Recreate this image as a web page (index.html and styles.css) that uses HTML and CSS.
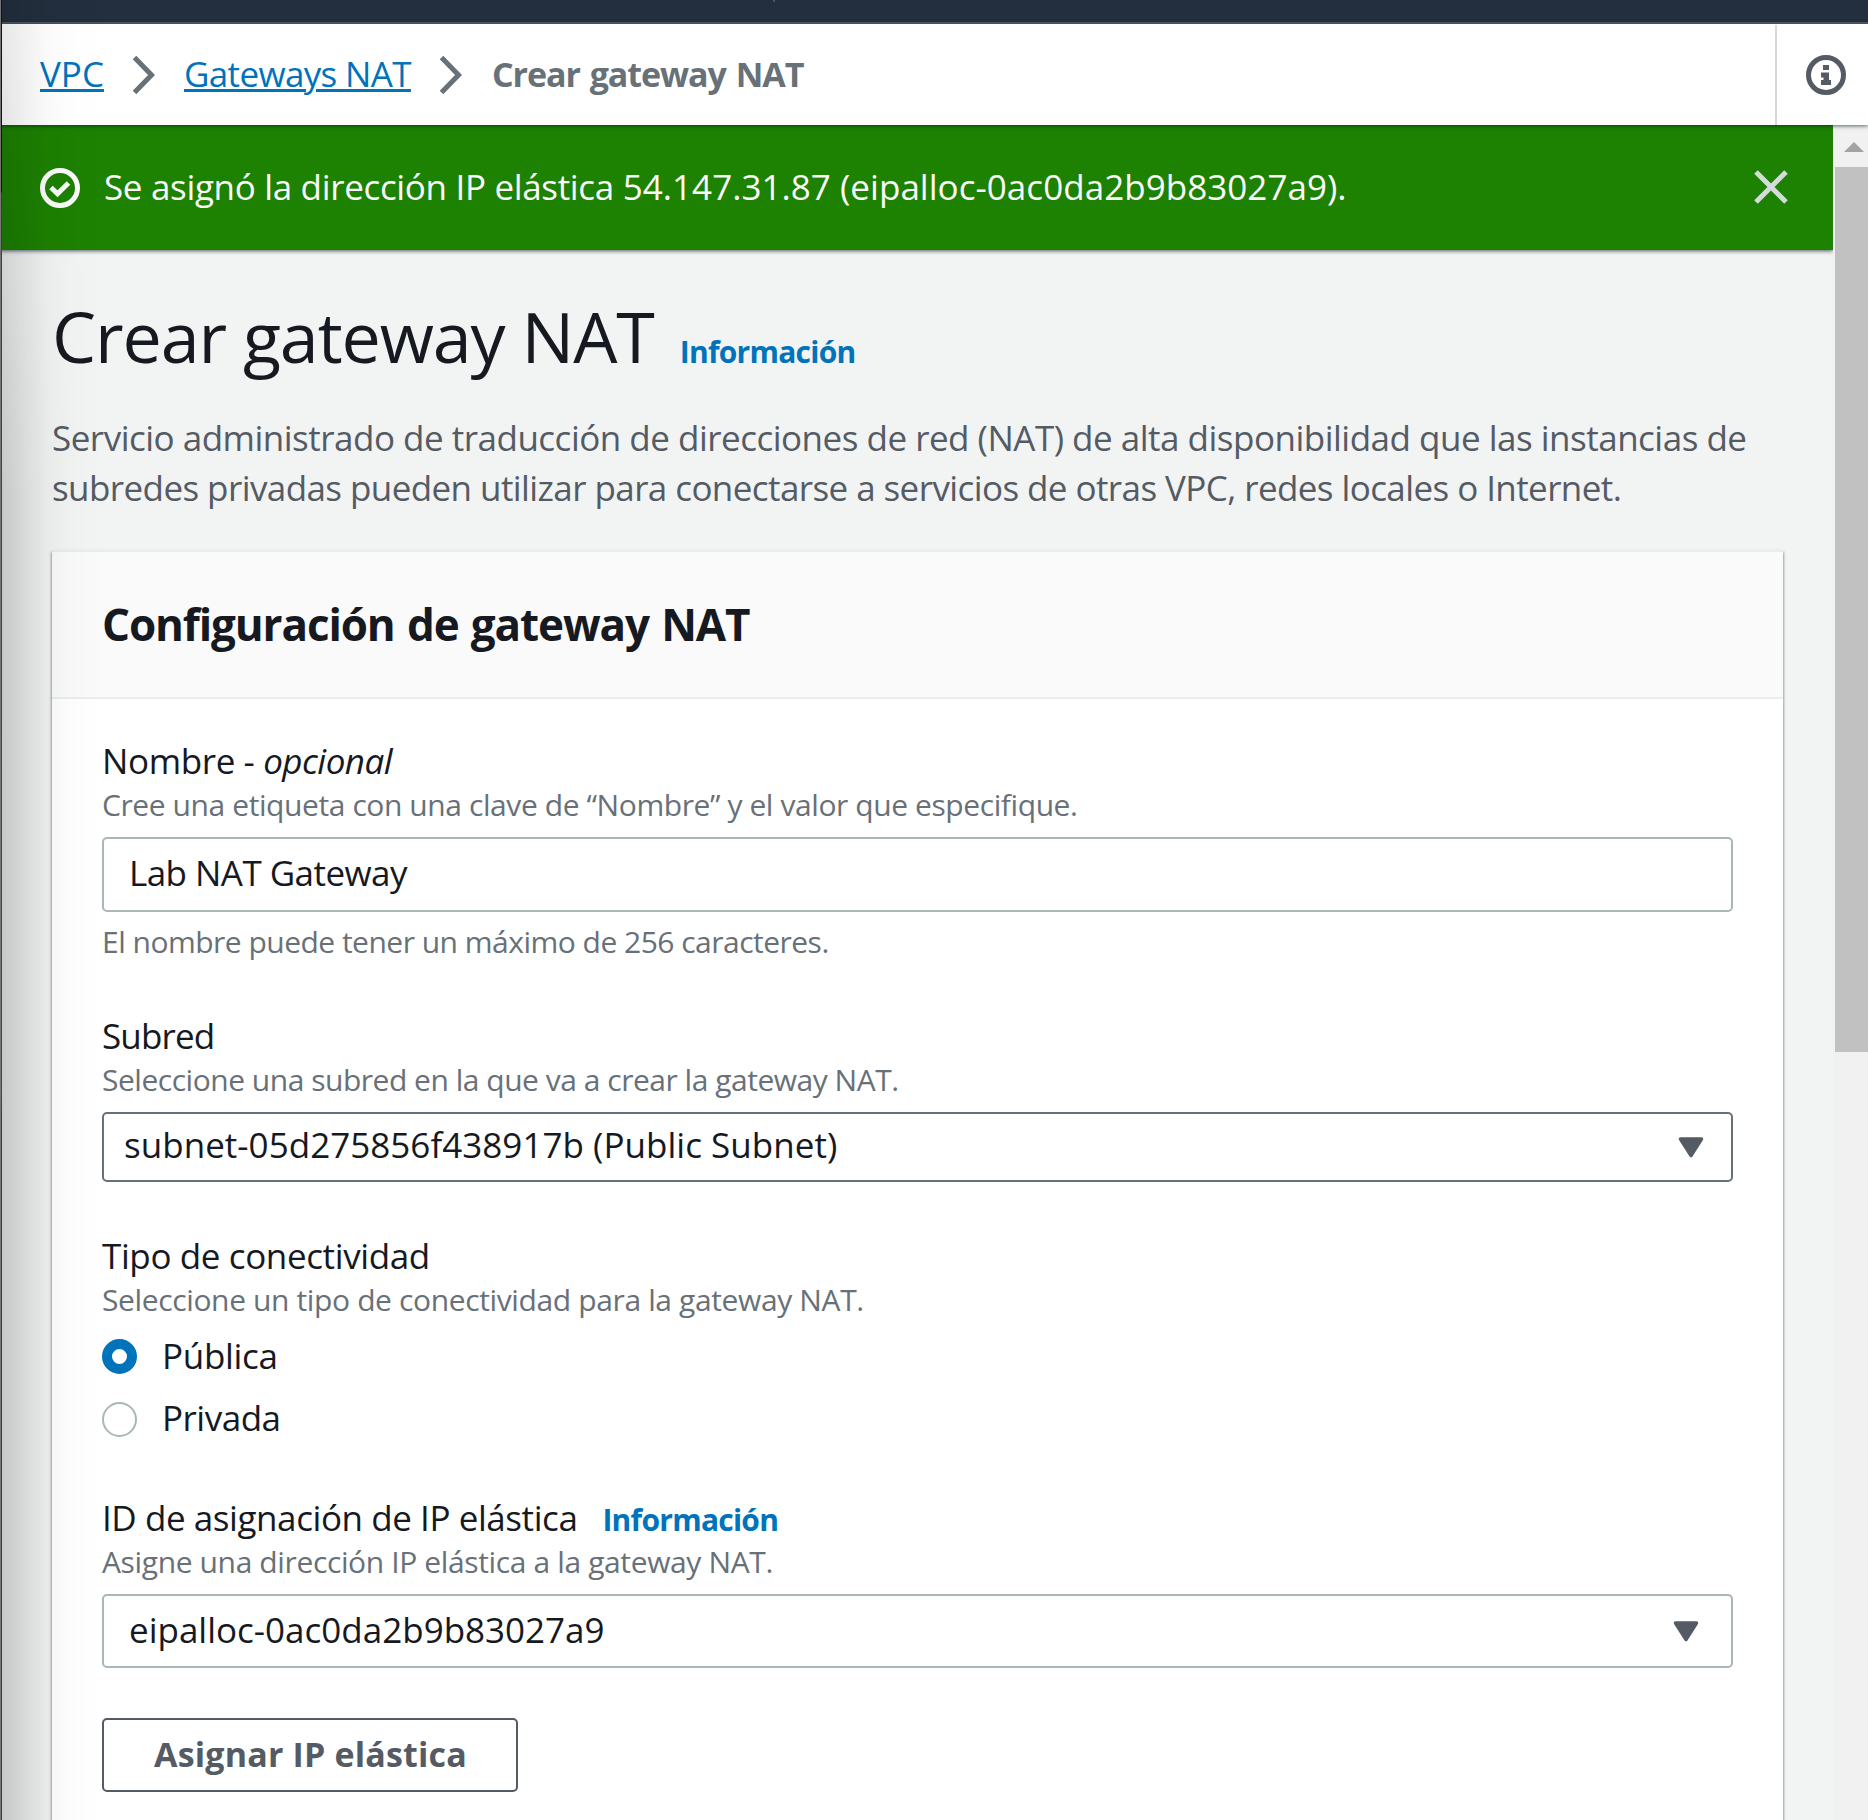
FILE: index.html
```
<!DOCTYPE html>
<html lang="es">
<head>
<meta charset="utf-8">
<title>Crear gateway NAT</title>
<link rel="stylesheet" href="styles.css">
</head>
<body>
<div class="app">
  <div class="topbar"><span class="topbar-tick"></span></div>

  <header class="header">
    <nav class="breadcrumb">
      <a class="crumb" href="#">VPC</a>
      <svg class="chevron" width="24" height="40" viewBox="0 0 24 40"><path d="M2.5 2.5 L19.5 20 L2.5 37.5" fill="none" stroke="#687078" stroke-width="5"/></svg>
      <a class="crumb crumb-gateways" href="#">Gateways NAT</a>
      <svg class="chevron" width="24" height="40" viewBox="0 0 24 40"><path d="M2.5 2.5 L19.5 20 L2.5 37.5" fill="none" stroke="#687078" stroke-width="5"/></svg>
      <span class="crumb-current">Crear gateway NAT</span>
    </nav>
    <button class="info-toggle" aria-label="Información">
      <svg width="40" height="40" viewBox="0 0 40 40"><circle cx="20" cy="20" r="17.5" fill="none" stroke="#545b64" stroke-width="5"/><path d="M17 10h6v5h-6zM15 17.5h8V25h2v5H15v-5h2.500v-2.500H15z" fill="#545b64"/></svg>
    </button>
  </header>

  <div class="viewport">
    <main class="content">
      <div class="flash">
        <svg class="flash-icon" width="40" height="40" viewBox="0 0 40 40"><circle cx="20" cy="20" r="17.500" fill="none" stroke="#fafafa" stroke-width="5"/><path d="M11 19.500l6.500 6.200L28.500 15" fill="none" stroke="#fafafa" stroke-width="5"/></svg>
        <p class="flash-text"><span class="flash-lead">Se asignó la dirección IP elástica </span>54.147.31.87 (eipalloc-0ac0da2b9b83027a9).</p>
        <button class="flash-close" aria-label="Cerrar">
          <svg width="34" height="34" viewBox="0 0 34 34"><path d="M2 2L32 32M32 2L2 32" stroke="#d5dbdb" stroke-width="5"/></svg>
        </button>
      </div>

      <div class="page">
        <div class="title-row">
          <h1>Crear gateway NAT</h1>
          <a class="info-link" href="#">Información</a>
        </div>
        <p class="description"><span class="line-a">Servicio administrado de traducción de direcciones de red (NAT) de alta disponibilidad que las instancias de</span><br><span class="line-b">subredes privadas pueden utilizar para conectarse a servicios de otras VPC, redes locales o Internet.</span></p>

        <section class="card">
          <div class="card-header"><h2>Configuración de gateway NAT</h2></div>
          <div class="card-body">
            <div class="field">
              <div class="label">Nombre - <i>opcional</i></div>
              <div class="hint">Cree una etiqueta con una clave de “Nombre” y el valor que especifique.</div>
              <div class="control control-input"><span class="value-name">Lab NAT Gateway</span></div>
              <div class="hint hint-limit">El nombre puede tener un máximo de 256 caracteres.</div>
            </div>

            <div class="field">
              <div class="label label-subnet">Subred</div>
              <div class="hint hint-subnet">Seleccione una subred en la que va a crear la gateway NAT.</div>
              <div class="control control-subnet">
                <span class="value-subnet">subnet-05d275856f438917b (Public Subnet)</span>
                <svg width="26" height="21" viewBox="0 0 26 21"><path d="M2.500 2H23.500L13 18.500z" fill="#545b64" stroke="#545b64" stroke-width="3.500" stroke-linejoin="round"/></svg>
              </div>
            </div>

            <div class="field">
              <div class="label">Tipo de conectividad</div>
              <div class="hint hint-type">Seleccione un tipo de conectividad para la gateway NAT.</div>
              <div class="radios">
                <div class="radio-row"><span class="radio radio-on"></span><span class="radio-public">Pública</span></div>
                <div class="radio-row"><span class="radio radio-off"></span><span class="radio-private">Privada</span></div>
              </div>
            </div>

            <div class="field">
              <div class="label label-eip"><span>ID de asignación de IP elástica</span><a class="info-link" href="#">Información</a></div>
              <div class="hint hint-type">Asigne una dirección IP elástica a la gateway NAT.</div>
              <div class="control control-eip">
                <span>eipalloc-0ac0da2b9b83027a9</span>
                <svg width="26" height="21" viewBox="0 0 26 21"><path d="M2.500 2H23.500L13 18.500z" fill="#545b64" stroke="#545b64" stroke-width="3.500" stroke-linejoin="round"/></svg>
              </div>
            </div>

            <button class="button">Asignar IP elástica</button>
          </div>
        </section>
      </div>
    </main>

    <div class="scrollbar">
      <svg width="20" height="10" viewBox="0 0 20 10"><path d="M10 0L20 10H0z" fill="#a3a3a3"/></svg>
      <div class="thumb"></div>
    </div>
  </div>

  <div class="edge-shade"></div>
  <div class="edge-line"></div>
</div>
</body>
</html>
```
FILE: styles.css
```
* { box-sizing: border-box; }
body {
  margin: 0;
  font-family: "Open Sans", "Noto Sans", sans-serif;
  font-size: 35px;
  line-height: 50px;
  color: #16191f;
  background: #f2f3f3;
}
h1, h2, p { margin: 0; }
svg { display: block; flex: none; }
button { font: inherit; background: none; border: 0; padding: 0; }
a { color: #0073bb; text-decoration: none; }

.app {
  position: relative;
  display: flex;
  flex-direction: column;
  width: 1868px;
  height: 1820px;
  overflow: hidden;
}

/* top navigation */
.topbar {
  flex: none;
  height: 24px;
  padding-left: 773px;
  background: #232f3e;
  border-bottom: 2px solid #545b64;
}
.topbar-tick { display: block; width: 2px; height: 2px; background: #4a5563; }

.header {
  position: relative;
  z-index: 2;
  flex: none;
  display: flex;
  justify-content: space-between;
  height: 101px;
  background: #fff;
  box-shadow: 0 1px 4px rgba(0, 28, 36, .65);
}
.breadcrumb {
  display: flex;
  align-items: center;
  gap: 28px;
  padding-left: 40px;
}
.crumb, .crumb-current { padding-bottom: 1px; white-space: nowrap; }
.crumb {
  text-decoration: underline;
  text-decoration-thickness: 3px;
  text-underline-offset: 2px;
}
.crumb-gateways { letter-spacing: -.64px; }
.crumb-current { padding-left: 1px; font-size: 34px; font-weight: 700; letter-spacing: -1.05px; word-spacing: 2px; color: #687078; }
.info-toggle {
  display: flex;
  align-items: center;
  width: 93px;
  margin-top: 1px;
  padding-left: 29px;
  border-left: 2px solid #d5dbdb;
}

/* scrolling area */
.viewport { flex: 1; display: flex; min-height: 0; }
.content { flex: 1; overflow: hidden; }
.scrollbar {
  width: 35px;
  padding: 17px 0 0 2px;
  background: #f1f1f1;
}
.scrollbar svg { margin-left: 9px; }
.thumb { height: 885px; margin-top: 15px; background: #c1c1c1; }

.flash {
  display: flex;
  align-items: center;
  height: 125px;
  padding: 0 45px 0 40px;
  background: #1d8102;
  color: #fafafa;
  box-shadow: 0 1px 4px rgba(0, 28, 36, .7);
}
.flash-text {
  flex: 1;
  padding: 0 0 1px 24px;
  letter-spacing: .04px;
  white-space: nowrap;
}
.flash-lead { letter-spacing: -.33px; }
.flash-close { padding-bottom: 1px; }

.page { padding: 41px 50px 0 52px; }
.title-row { display: flex; align-items: baseline; gap: 26px; }
h1 { font-size: 70px; line-height: 90px; font-weight: 400; letter-spacing: -1.12px; }
.info-link { font-size: 30px; line-height: 40px; font-weight: 700; letter-spacing: -.74px; }
.description { margin-top: 32px; color: #545b64; white-space: nowrap; }
.line-a { letter-spacing: -.5px; }
.line-b { letter-spacing: -.585px; }

.card {
  height: 1300px;
  margin-top: 37px;
  background: #fff;
  border-top: 2px solid #eaeded;
  box-shadow: 0 2px 3px rgba(0, 28, 36, .4), 1px 2px 2px rgba(0, 28, 36, .15), -1px 2px 2px rgba(0, 28, 36, .15);
}
.card-header {
  display: flex;
  align-items: center;
  height: 147px;
  padding: 0 50px 2px;
  background: #fafafa;
  border-bottom: 2px solid #eaeded;
}
h2 { font-size: 44px; line-height: 60px; font-weight: 700; letter-spacing: -1.12px; word-spacing: 2px; }
.card-body { display: flex; flex-direction: column; gap: 50px; padding: 37px 50px 0; }

/* form fields */
.field { display: flex; flex-direction: column; }
.label { letter-spacing: -.38px; }
.label i { letter-spacing: -.55px; }
.label-subnet { letter-spacing: -.85px; }
.label-eip { display: flex; align-items: baseline; gap: 25px; height: 50px; letter-spacing: -.43px; }
.hint { font-size: 30px; line-height: 38px; color: #687078; letter-spacing: -.41px; white-space: nowrap; }
.hint-limit { margin-top: 11px; letter-spacing: -.51px; }
.hint-subnet { letter-spacing: -.48px; }
.hint-type { letter-spacing: -.37px; }
.control {
  display: flex;
  align-items: center;
  justify-content: space-between;
  border: 2px solid #aab7b8;
  border-radius: 5px;
  background: #fff;
}
.control-input { height: 75px; margin-top: 13px; padding: 0 25px 4px; }
.control-subnet { height: 70px; margin: 13px 0 -1px; padding: 0 27px 0 20px; border-color: #687078; }
.control-subnet span { padding-bottom: 5px; }
.control-eip { height: 74px; margin-top: 13px; padding: 0 32px 0 25px; }
.control-eip span { padding-bottom: 2px; }
.value-name { letter-spacing: -.55px; }
.value-subnet { letter-spacing: .03px; }

.radios { display: flex; flex-direction: column; gap: 14px; margin: 13px 0 1px; }
.radio-row { display: flex; align-items: center; gap: 25px; height: 48px; }
.radio { width: 35px; height: 35px; border-radius: 50%; }
.radio-on { background: #fff; border: 10px solid #0073bb; }
.radio-off { border: 2px solid #aab7b8; margin-top: 3px; }
.radio-public { letter-spacing: -.3px; }
.radio-private { letter-spacing: -.5px; }

.button {
  width: 416px;
  height: 74px;
  padding: 0 0 3px 1px;
  border: 2px solid #545b64;
  border-radius: 5px;
  color: #545b64;
  font-size: 34px;
  font-weight: 700;
  letter-spacing: .17px;
}

/* window edge on the left */
.edge-shade {
  position: absolute;
  z-index: 3;
  inset: 0 auto 0 2px;
  width: 100px;
  background: linear-gradient(90deg, rgba(0, 0, 0, .175), rgba(0, 0, 0, .1) 24%, rgba(0, 0, 0, .035) 46%, rgba(0, 0, 0, .01) 68%, transparent);
  -webkit-mask-image: linear-gradient(rgba(0, 0, 0, .5), rgba(0, 0, 0, .6) 125px, #000 500px);
  mask-image: linear-gradient(rgba(0, 0, 0, .5), rgba(0, 0, 0, .6) 125px, #000 500px);
}
.edge-line {
  position: absolute;
  z-index: 4;
  inset: 0 auto 0 0;
  width: 2px;
  border-left: 1px solid #757575;
  background: linear-gradient(#101024, #101024 192px, #4a3358 193px, #5a3a68 1100px, #7a0f8a 1112px);
}
```
